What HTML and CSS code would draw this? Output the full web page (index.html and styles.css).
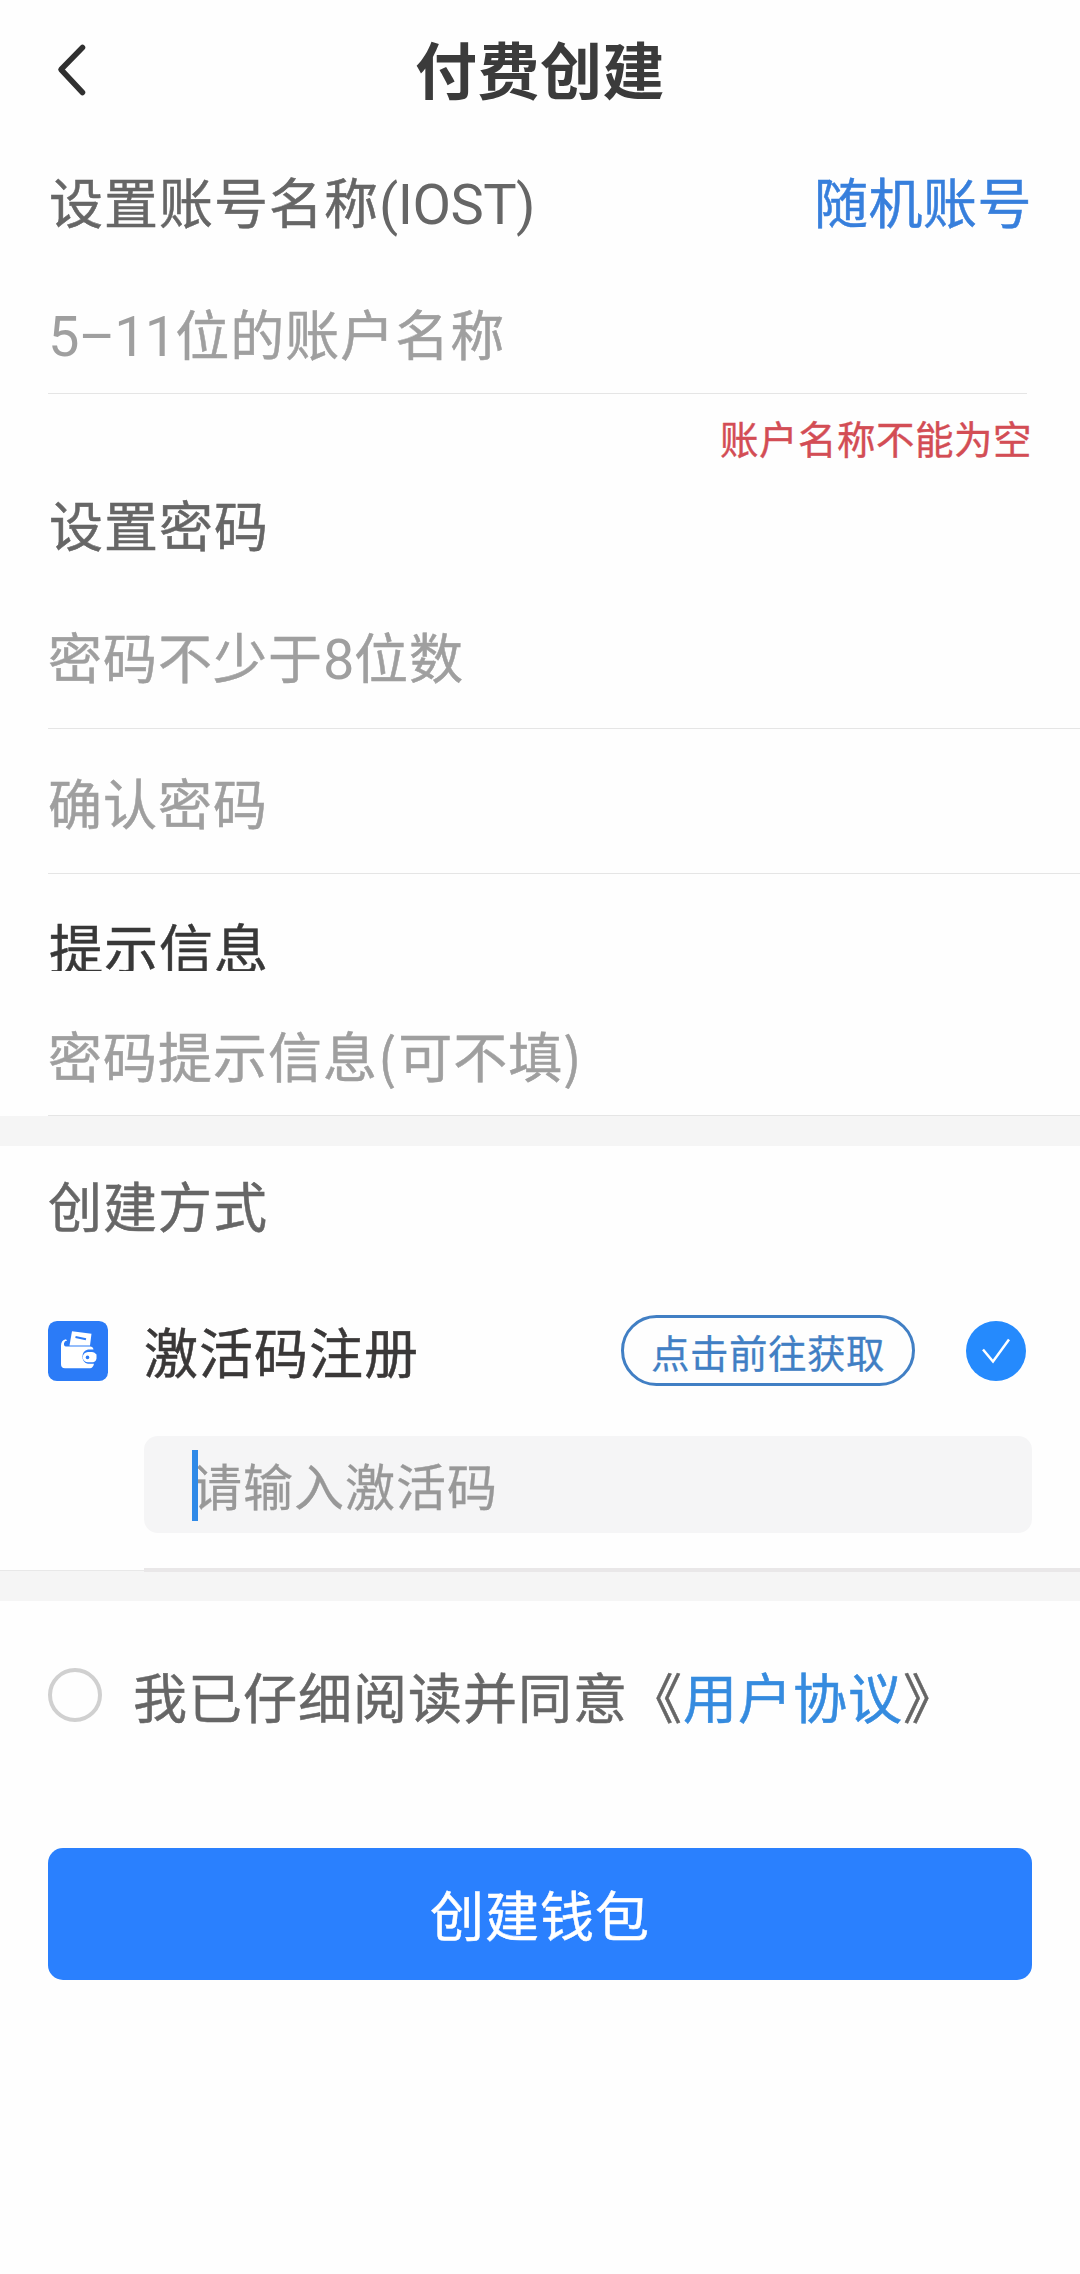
FILE: index.html
```html
<!DOCTYPE html>
<html lang="zh-CN">
<head>
<meta charset="utf-8">
<title>付费创建</title>
<link rel="stylesheet" href="styles.css">
</head>
<body>
<header class="header">
  <svg class="back" width="40" height="60" viewBox="0 0 40 60" fill="none"><path d="M34.500 9.500 13 31.500 34.500 54.500" stroke="#303030" stroke-width="5.500" stroke-linecap="round" stroke-linejoin="round"/></svg>
  <h1 class="title">付费创建</h1>
</header>
<main>
  <section>
    <div class="label-row"><span class="label">设置账号名称<span class="latin">(IOST)</span></span><a class="random">随机账号</a></div>
    <div class="field field-name"><span><span class="latin num">5–11</span>位的账户名称</span></div>
    <div class="error">账户名称不能为空</div>
    <div class="label label-password">设置密码</div>
    <div class="field field-password"><span>密码不少于<span class="latin">8</span>位数</span></div>
    <div class="field field-confirm">确认密码</div>
    <div class="label label-hint">提示信息</div>
    <div class="field field-hint"><span>密码提示信息<span class="paren">(</span>可不填<span class="paren">)</span></span></div>
  </section>
  <div class="band"></div>
  <section>
    <div class="label label-method">创建方式</div>
    <div class="method">
      <svg class="wallet" width="60" height="60" viewBox="0 0 60 61" preserveAspectRatio="none">
        <rect width="60" height="61" rx="9" fill="#2b7bf7"/>
        <path d="M24 10.500 43.500 13 42 25H21.500Z" fill="#fff"/>
        <path d="M27.500 16.200 38 18.500" stroke="#2b7bf7" stroke-width="2"/>
        <path d="M18 18.500Q13 19.500 13 25V44Q13 48 17 48H42Q45 48 46 43.500H40A7.500 7.500 0 0 1 40 29H45.500Q45 26 42 26H18Q15.500 25.500 16 22.500Q16.500 20 19 20Z" fill="#fff"/>
        <path d="M40 31.500H44Q46 31.500 48.500 34V38Q48 42 43 42H40A5.250 5.250 0 0 1 40 31.500Z" fill="#fff"/>
        <circle cx="39.500" cy="37" r="1.800" fill="#2b7bf7"/>
      </svg>
      <span class="method-name">激活码注册</span>
      <a class="get">点击前往获取</a>
      <svg class="checked" width="60" height="60" viewBox="0 0 60 60" fill="none"><circle cx="30" cy="30" r="30" fill="#258afd"/><path d="M17 28.500 27 40.500 43 18.500" stroke="#fff" stroke-width="2.500"/></svg>
    </div>
    <div class="code"><span class="caret"></span>请输入激活码</div>
  </section>
  <div class="band band-lower"><span class="band-edge"></span></div>
  <div class="agree"><span class="radio"></span><span>我已仔细阅读并同意《<a class="terms">用户协议</a>》</span></div>
  <button class="submit">创建钱包</button>
</main>
</body>
</html>
```
FILE: styles.css
```css
* { box-sizing: border-box; }
body {
  margin: 0;
  min-height: 2274px;
  background: #fefefe;
  color: #666;
  font: 400 54px "Noto Sans CJK SC", sans-serif;
  font-kerning: none;
  letter-spacing: 1px;
  white-space: nowrap;
  -webkit-text-stroke: 0.5px currentColor;
}
.header {
  display: grid;
  grid-template-columns: 200px 1fr 200px;
  align-items: center;
  height: 135px;
}
.back { margin-left: 48px; }
.title {
  margin: 0;
  text-align: center;
  color: #3b3b3b;
  font-size: 62px;
  letter-spacing: 0.5px;
  line-height: 90px;
  font-weight: 700;
  -webkit-text-stroke: 0;
}
.label-row {
  display: flex;
  align-items: center;
  justify-content: space-between;
  height: 132px;
  padding: 0 48px 1px 49px;
}
.latin {
  font-family: Roboto, sans-serif;
  font-size: 56px;
  letter-spacing: -0.5px;
  line-height: 1;
  -webkit-text-stroke: 0;
}
.num { letter-spacing: -1px; }
.paren { letter-spacing: 2px; }
.random { color: #377fdc; letter-spacing: 0.5px; }
.field {
  display: flex;
  align-items: center;
  margin-left: 48px;
  border-bottom: 1px solid #e5e5e5;
  color: #9f9f9f;
}
.field-name { height: 127px; padding-top: 5px; margin-right: 53px; }
.error {
  height: 86px;
  padding-right: 48px;
  line-height: 86px;
  text-align: right;
  color: #d34d55;
  font-size: 38.5px;
  letter-spacing: 0.5px;
  -webkit-text-stroke-width: 0.4px;
}
.label-password { height: 88px; line-height: 88px; padding-left: 49px; }
.field-password { height: 161px; padding-top: 15px; }
.field-confirm { height: 145px; }
.label-hint {
  height: 64px;
  margin-top: 33px;
  padding-left: 49px;
  line-height: 79px;
  overflow: hidden;
  color: #383838;
}
.field-hint { height: 145px; padding-top: 23px; }
.band { height: 30px; background: #f5f5f5; }
.label-method { height: 118px; line-height: 118px; padding-left: 48px; }
.method {
  display: flex;
  align-items: center;
  height: 172px;
  padding: 1px 54px 0 48px;
}
.method-name { margin-left: 36px; color: #3a3838; }
.get {
  display: flex;
  align-items: center;
  justify-content: center;
  width: 294px;
  height: 71px;
  margin-left: auto;
  margin-right: 51px;
  border: 3px solid #417fc4;
  border-radius: 36px;
  color: #417fc4;
  font-size: 38.5px;
  letter-spacing: 0.5px;
  -webkit-text-stroke-width: 0.3px;
}
.code {
  position: relative;
  display: flex;
  align-items: center;
  height: 97px;
  margin: 0 48px 37px 144px;
  padding: 0 0 2px 48px;
  border-radius: 14px;
  background: #f5f5f6;
  color: #989898;
  font-size: 50px;
  letter-spacing: 1px;
  -webkit-text-stroke-width: 0.3px;
}
.caret {
  position: absolute;
  left: 48px;
  top: 14px;
  width: 6px;
  height: 71px;
  background: #2f8ae8;
}
.band-lower { display: flex; height: 31px; border-top: 1px solid #e8e8e8; }
.band-edge { width: 936px; height: 4px; margin: -3px 0 0 auto; background: #e9e7e8; }
.agree {
  display: flex;
  align-items: center;
  height: 188px;
  padding-left: 48px;
}
.radio {
  width: 54px;
  height: 54px;
  margin-right: 31px;
  border: 4px solid #d0d0d0;
  border-radius: 50%;
}
.terms { color: #358bdf; }
.submit {
  display: block;
  width: 984px;
  height: 132px;
  margin: 59px 48px 0;
  padding: 0 0 2px;
  border: 0;
  border-radius: 15px;
  background: #2a80fe;
  color: #fff;
  font: inherit;
  letter-spacing: inherit;
}
```
